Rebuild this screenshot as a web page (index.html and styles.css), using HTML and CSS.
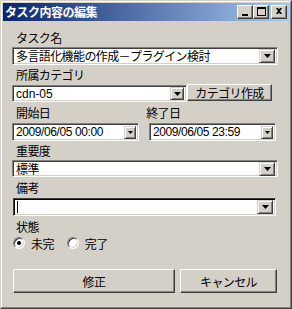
FILE: index.html
```html
<!DOCTYPE html>
<html lang="ja">
<head>
<meta charset="utf-8">
<title>タスク内容の編集</title>
<link rel="stylesheet" href="styles.css">
</head>
<body>
<div class="window">
  <div class="frame">
    <div class="titlebar">
      <span class="title">タスク内容の編集</span>
      <div class="caption-btns">
        <span class="cbtn"><svg width="14" height="12" viewBox="0 0 14 12"><rect x="4" y="8" width="6" height="2" fill="#000"/></svg></span>
        <span class="cbtn"><svg width="14" height="12" viewBox="0 0 14 12"><path d="M3 1h9v9h-9z M4 3v6h7v-6z" fill="#000" fill-rule="evenodd"/></svg></span>
        <span class="cbtn cbtn-close"><svg width="14" height="12" viewBox="0 0 14 12"><path d="M4 2h2l1 1.5 1-1.5h2l-2 3 2 3h-2l-1-1.5-1 1.5h-2l2-3z" fill="#000"/></svg></span>
      </div>
    </div>
    <div class="client">
      <div class="label l1">タスク名</div>
      <div class="combo c1">
        <span class="ctext">多言語化機能の作成－プラグイン検討</span>
        <span class="dbtn"><svg width="7" height="4" viewBox="0 0 7 4"><path d="M0 0h7l-3.5 4z" fill="#000"/></svg></span>
      </div>

      <div class="label l2">所属カテゴリ</div>
      <div class="row r2">
        <div class="combo c2">
          <span class="ctext">cdn-05</span>
          <span class="dbtn small"><svg width="7" height="4" viewBox="0 0 7 4"><path d="M0 0h7l-3.5 4z" fill="#000"/></svg></span>
        </div>
        <button class="btn catbtn">カテゴリ作成</button>
      </div>

      <div class="row labels3">
        <div class="label l3a">開始日</div>
        <div class="label l3b">終了日</div>
      </div>
      <div class="row r3">
        <div class="combo date d1">
          <span class="ctext">2009/06/05 00:00</span>
          <span class="dbtn tiny"><svg width="5" height="3" viewBox="0 0 5 3"><path d="M0 0h5l-2.5 3z" fill="#000"/></svg></span>
        </div>
        <div class="combo date d2">
          <span class="ctext">2009/06/05 23:59</span>
          <span class="dbtn tiny"><svg width="5" height="3" viewBox="0 0 5 3"><path d="M0 0h5l-2.5 3z" fill="#000"/></svg></span>
        </div>
      </div>

      <div class="label l4">重要度</div>
      <div class="combo c3">
        <span class="ctext">標準</span>
        <span class="dbtn"><svg width="7" height="4" viewBox="0 0 7 4"><path d="M0 0h7l-3.5 4z" fill="#000"/></svg></span>
      </div>

      <div class="label l5">備考</div>
      <div class="combo c4">
        <span class="ctext"><span class="caret"></span></span>
        <span class="dbtn"><svg width="7" height="4" viewBox="0 0 7 4"><path d="M0 0h7l-3.5 4z" fill="#000"/></svg></span>
      </div>

      <div class="label l6">状態</div>
      <div class="row radios">
        <span class="radio checked"><span class="dot"></span></span>
        <span class="rlabel">未完</span>
        <span class="radio r2b"></span>
        <span class="rlabel">完了</span>
      </div>

      <div class="row actions">
        <button class="btn okbtn">修正</button>
        <button class="btn cancelbtn">キャンセル</button>
      </div>
    </div>
  </div>
</div>
</body>
</html>
```

FILE: styles.css
```css
html, body {
  margin: 0;
  padding: 0;
  background: #D4D0C8;
}
body {
  font-family: "Noto Sans CJK JP", "Liberation Sans", sans-serif;
  font-size: 12px;
  color: #000;
}
.window {
  width: 292px;
  height: 309px;
  box-sizing: border-box;
  border: 1px solid;
  border-color: #D4D0C8 #404040 #404040 #D4D0C8;
  background: #D4D0C8;
}
.frame {
  height: 100%;
  box-sizing: border-box;
  border: 1px solid;
  border-color: #FFFFFF #808080 #808080 #FFFFFF;
  padding: 1px;
  display: flex;
  flex-direction: column;
}
.titlebar {
  height: 18px;
  flex: none;
  display: flex;
  align-items: center;
  justify-content: space-between;
  padding: 0 2px 0 2px;
  background: linear-gradient(to right, #0A246A, #A6CAF0);
}
.title {
  color: #fff;
  font-weight: bold;
  font-size: 12px;
  line-height: 14px;
  letter-spacing: -0.5px;
}
.caption-btns {
  display: flex;
  align-items: center;
}
.cbtn {
  width: 16px;
  height: 14px;
  box-sizing: border-box;
  border: 1px solid;
  border-color: #FFFFFF #404040 #404040 #FFFFFF;
  box-shadow: inset -1px -1px #808080;
  background: #D4D0C8;
  display: flex;
  align-items: center;
  justify-content: center;
}
.cbtn svg { display: block; }
.cbtn-close { margin-left: 2px; }

.client {
  flex: 1;
  display: flex;
  flex-direction: column;
  padding: 10px 0 0 9px;
}
.label {
  line-height: 13px;
  height: 13px;
  margin-left: 4px;
  letter-spacing: -0.6px;
  white-space: nowrap;
}
.row { display: flex; align-items: flex-start; }

.combo {
  box-sizing: border-box;
  height: 18px;
  border: 1px solid;
  border-color: #808080 #FFFFFF #FFFFFF #808080;
  box-shadow: inset 1px 1px #404040, inset -1px -1px #D4D0C8;
  background: #fff;
  display: flex;
  align-items: center;
  padding: 1px 2px;
}
.ctext {
  flex: 1;
  min-width: 0;
  line-height: 14px;
  white-space: nowrap;
  letter-spacing: -0.6px;
  padding-left: 1px;
  display: flex;
  align-items: center;
}
.dbtn {
  width: 16px;
  height: 14px;
  box-sizing: border-box;
  border: 1px solid;
  border-color: #D4D0C8 #404040 #404040 #D4D0C8;
  box-shadow: inset 1px 1px #FFFFFF, inset -1px -1px #808080;
  background: #D4D0C8;
  display: flex;
  align-items: center;
  justify-content: center;
  flex: none;
}
.dbtn svg { display: block; }
.dbtn.small { width: 14px; height: 13px; }
.dbtn.tiny { width: 12px; height: 13px; }

.c1 { width: 266px; margin-top: 3px; }
.l2 { margin-top: 3px; }
.r2 { margin-top: 3px; }
.c2 { width: 175px; height: 17px; margin-top: 1px; }
.catbtn { width: 85px; height: 17px; margin-left: 7px; }
.labels3 { margin-top: 4px; }
.l3b { margin-left: 96px; }
.r3 { margin-top: 4px; }
.date { width: 127px; height: 18px; }
.date .ctext { letter-spacing: -0.4px; font-family: "Liberation Sans", sans-serif; font-size: 12px; }
.c2 .ctext { font-family: "Liberation Sans", sans-serif; letter-spacing: 0; }
.d2 { margin-left: 10px; }
.l4 { margin-top: 3px; }
.c3 { width: 266px; height: 17px; margin-top: 3px; }
.l5 { margin-top: 4px; }
.c4 {
  width: 263px;
  margin-top: 4px;
  margin-left: 1px;
  border-color: #404040 #FFFFFF #FFFFFF #404040;
  box-shadow: inset 1px 1px #000, inset -1px -1px #D4D0C8;
}
.caret {
  display: block;
  width: 1px;
  height: 12px;
  background: #000;
}
.l6 { margin-top: 4px; }

.radios {
  margin-top: 4px;
  margin-left: 1px;
  align-items: center;
  height: 12px;
}
.radio {
  width: 12px;
  height: 12px;
  box-sizing: border-box;
  border-radius: 50%;
  border: 1px solid;
  border-color: #808080 #FFFFFF #FFFFFF #808080;
  box-shadow: inset 1px 1px #404040, inset -1px -1px #D4D0C8;
  background: #fff;
  display: flex;
  align-items: center;
  justify-content: center;
  flex: none;
}
.dot {
  width: 4px;
  height: 4px;
  border-radius: 50%;
  background: #000;
}
.rlabel {
  margin-left: 6px;
  line-height: 13px;
  letter-spacing: -0.6px;
}
.r2b { margin-left: 13px; }

.btn {
  box-sizing: border-box;
  border: 1px solid;
  border-color: #FFFFFF #404040 #404040 #FFFFFF;
  box-shadow: inset -1px -1px #808080;
  background: #D4D0C8;
  font-family: "Noto Sans CJK JP", "Liberation Sans", sans-serif;
  font-size: 12px;
  letter-spacing: -0.6px;
  color: #000;
  padding: 0;
  line-height: 13px;
  margin: 0;
}
.actions { margin-top: 20px; margin-left: 1px; }
.okbtn { width: 162px; height: 24px; }
.cancelbtn { width: 97px; height: 24px; margin-left: 5px; }
```
